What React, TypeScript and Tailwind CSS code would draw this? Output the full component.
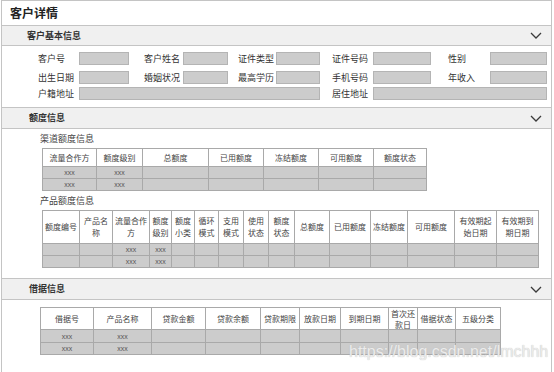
import type { ReactNode } from "react";

const line = "border-[#c4c4c4]";
const cell = "border-r border-b border-[#a9a9a9] flex items-center justify-center text-center";

function Chevron() {
  return (
    <svg width="12" height="7" viewBox="0 0 12 7" className="shrink-0">
      <path d="M1 1l5 5 5-5" fill="none" stroke="#3a3a3a" strokeWidth="1.3" />
    </svg>
  );
}

function SectionHeader({ title, className }: { title: string; className: string }) {
  return (
    <div className={`flex items-center justify-between border-b ${line} bg-[#f0f0f0] pr-[9px] ${className}`}>
      <span className="text-[9px] font-bold text-[#333]">{title}</span>
      <Chevron />
    </div>
  );
}

function Field({
  label,
  lw,
  iw,
  className = "",
}: {
  label: string;
  lw: string;
  iw: string;
  className?: string;
}) {
  return (
    <div className={`flex items-center ${className}`}>
      <span className={`${lw} text-[9px] leading-[12px] text-[#333]`}>{label}</span>
      <div className={`${iw} h-[13px] border border-[#b4b4b4] bg-[#cccccc]`} />
    </div>
  );
}

interface GridTableProps {
  cols: string;
  headers: string[];
  rows: string[][];
  headH: string;
  rowH: string[];
  lead: string;
  className?: string;
}

function GridTable({ cols, headers, rows, headH, rowH, lead, className = "" }: GridTableProps) {
  return (
    <div className={`grid w-max ${cols} border-l border-t border-[#a9a9a9] ${className}`}>
      {headers.map((h, i) => (
        <div
          key={"h" + i}
          className={`${cell} ${headH} ${lead} whitespace-pre-line bg-white text-[8px] text-[#444]`}
        >
          {h}
        </div>
      ))}
      {rows.map((r, ri) =>
        r.map((c, ci) => (
          <div
            key={ri + "-" + ci}
            className={`${cell} ${rowH[ri]} bg-[#cccccc] text-[7px] leading-none text-[#555]`}
          >
            {c}
          </div>
        ))
      )}
    </div>
  );
}

function Sub({ children, className = "" }: { children: ReactNode; className?: string }) {
  return (
    <div className={`pl-[38px] text-[9px] leading-[12px] text-[#444] ${className}`}>{children}</div>
  );
}

const blank = (n: number, filled: number[]) =>
  Array.from({ length: n }, (_, i) => (filled.includes(i) ? "xxx" : ""));

export default function App() {
  return (
    <div className="relative h-[372px] w-[554px] overflow-hidden bg-white font-['Noto_Sans_CJK_SC','Liberation_Sans',sans-serif]">
      <div className={`ml-[1px] w-[551px] border ${line} border-[#bdbdbd]`}>
        {/* title */}
        <div className={`flex h-[25px] items-center border-b ${line} pl-[8px]`}>
          <span className="text-[12px] font-bold text-[#222]">客户详情</span>
        </div>

        {/* basic info */}
        <SectionHeader title="客户基本信息" className="h-[20px] pl-[25px]" />
        <div className={`h-[62px] border-b ${line} pl-[36px] pt-[6px]`}>
          <div className="flex">
            <Field label="客户号" lw="w-[41px]" iw="w-[50px]" className="mr-[15px]" />
            <Field label="客户姓名" lw="w-[39px]" iw="w-[45px]" className="mr-[10px]" />
            <Field label="证件类型" lw="w-[38px]" iw="w-[44px]" className="mr-[12px]" />
            <Field label="证件号码" lw="w-[41px]" iw="w-[58px]" className="mr-[17px]" />
            <Field label="性别" lw="w-[42px]" iw="w-[57px]" />
          </div>
          <div className="mt-[6px] flex">
            <Field label="出生日期" lw="w-[41px]" iw="w-[50px]" className="mr-[15px]" />
            <Field label="婚姻状况" lw="w-[39px]" iw="w-[45px]" className="mr-[10px]" />
            <Field label="最高学历" lw="w-[38px]" iw="w-[44px]" className="mr-[12px]" />
            <Field label="手机号码" lw="w-[41px]" iw="w-[58px]" className="mr-[17px]" />
            <Field label="年收入" lw="w-[42px]" iw="w-[57px]" />
          </div>
          <div className="mt-[3px] flex">
            <Field label="户籍地址" lw="w-[41px]" iw="w-[241px]" className="mr-[12px]" />
            <Field label="居住地址" lw="w-[41px]" iw="w-[174px]" />
          </div>
        </div>

        {/* quota info */}
        <SectionHeader title="额度信息" className="h-[21px] pl-[27px]" />
        <div className={`h-[150px] border-b ${line} pt-[4px]`}>
          <Sub>渠道额度信息</Sub>
          <GridTable
            className="ml-[40px] mt-[3px]"
            cols="grid-cols-[54px_46px_66px_55px_55px_55px_53px]"
            headers={["流量合作方", "额度级别", "总额度", "已用额度", "冻结额度", "可用额度", "额度状态"]}
            rows={[blank(7, [0, 1]), blank(7, [0, 1])]}
            headH="h-[18px]"
            rowH={["h-[12px]", "h-[12px]"]}
            lead="leading-[12px]"
          />
          <Sub className="mt-[4px]">产品额度信息</Sub>
          <GridTable
            className="ml-[40px] mt-[3px]"
            cols="grid-cols-[37px_33px_37px_22px_23px_24px_25px_25px_26px_35px_41px_37px_47px_42px_42px]"
            headers={[
              "额度编号",
              "产品名\n称",
              "流量合作\n方",
              "额度\n级别",
              "额度\n小类",
              "循环\n模式",
              "支用\n模式",
              "使用\n状态",
              "额度\n状态",
              "总额度",
              "已用额度",
              "冻结额度",
              "可用额度",
              "有效期起\n始日期",
              "有效期到\n期日期",
            ]}
            rows={[blank(15, [2, 3]), blank(15, [2, 3])]}
            headH="h-[33px]"
            rowH={["h-[12px]", "h-[12px]"]}
            lead="leading-[12px]"
          />
        </div>

        {/* loan info */}
        <SectionHeader title="借据信息" className="h-[21px] pl-[27px]" />
        <div className="h-[73px] pt-[7px]">
          <GridTable
            className="ml-[38px]"
            cols="grid-cols-[53px_58px_54px_55px_39px_41px_48px_29px_38px_45px]"
            headers={[
              "借据号",
              "产品名称",
              "贷款金额",
              "贷款余额",
              "贷款期限",
              "放款日期",
              "到期日期",
              "首次还\n款日",
              "借据状态",
              "五级分类",
            ]}
            rows={[blank(10, [0, 1]), blank(10, [0, 1])]}
            headH="h-[22px]"
            rowH={["h-[13px]", "h-[12px]"]}
            lead="leading-[11px]"
          />
        </div>
      </div>

      {/* watermark */}
      <div className="pointer-events-none absolute left-[349px] top-[343px] font-['Liberation_Sans',sans-serif] text-[16px] leading-[18px] text-[#ececec] [text-shadow:0_0_1px_#b8b8b8]">
        https://blog.csdn.net/lmchhh
      </div>
    </div>
  );
}
